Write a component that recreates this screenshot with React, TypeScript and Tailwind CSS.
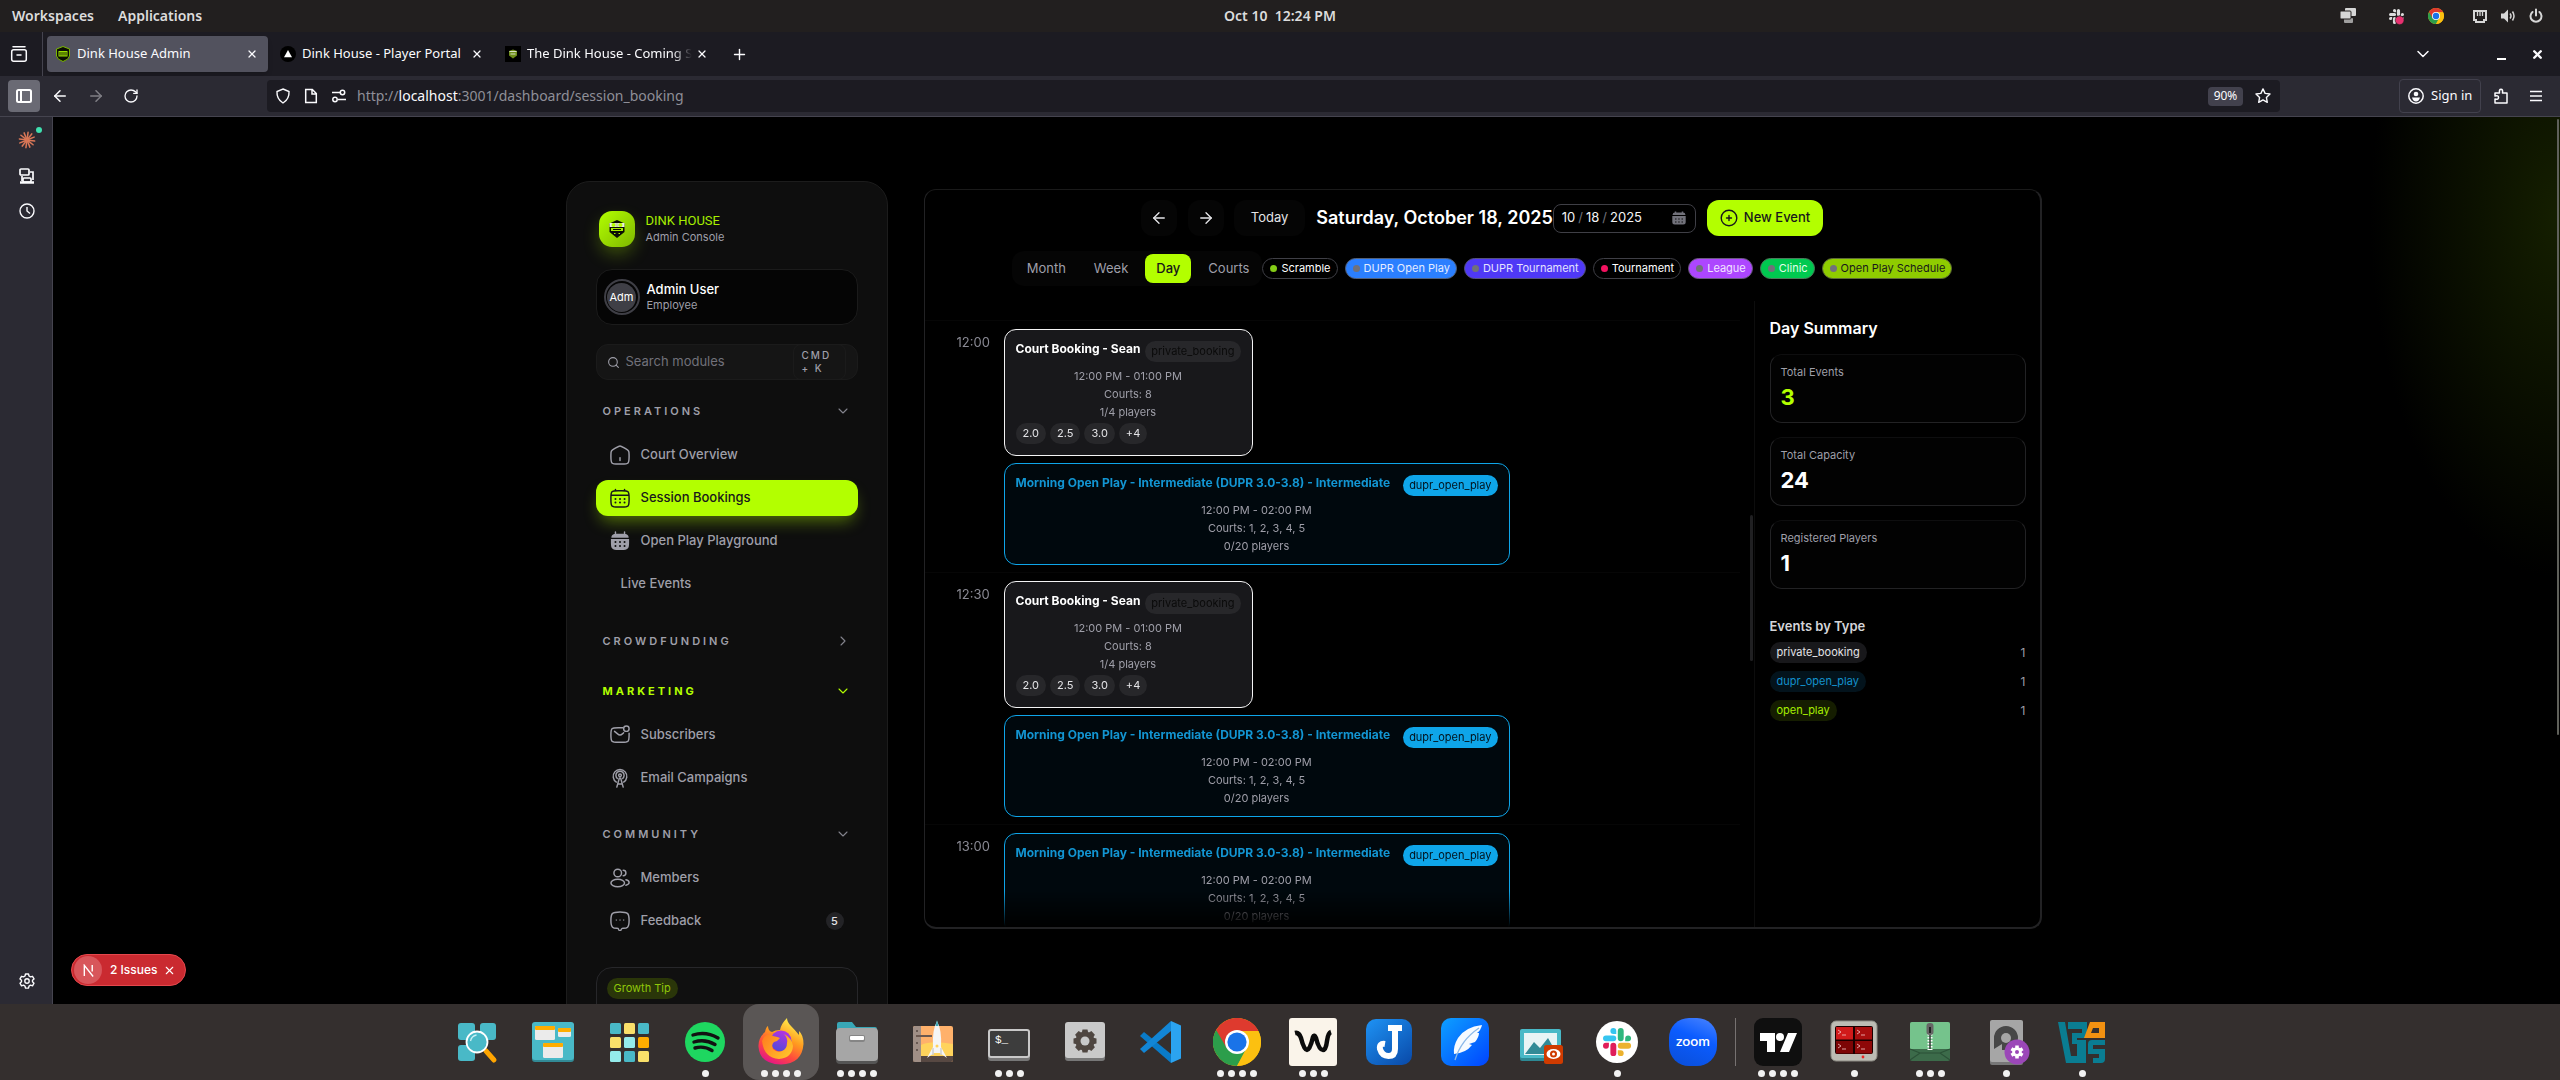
import React from 'react';
import type { ReactNode } from 'react';
import { ArrowLeft, ArrowRight, ChevronDown, ChevronRight, Plus, RotateCw, Search, X } from 'lucide-react';

const SLACK = [
  ['#e01e5a', 'M5.042 15.165a2.528 2.528 0 0 1-2.52 2.523A2.528 2.528 0 0 1 0 15.165a2.527 2.527 0 0 1 2.522-2.52h2.52v2.52zM6.313 15.165a2.527 2.527 0 0 1 2.521-2.52 2.527 2.527 0 0 1 2.521 2.52v6.313A2.528 2.528 0 0 1 8.834 24a2.528 2.528 0 0 1-2.521-2.522v-6.313z'],
  ['#36c5f0', 'M8.834 5.042a2.528 2.528 0 0 1-2.521-2.52A2.528 2.528 0 0 1 8.834 0a2.528 2.528 0 0 1 2.521 2.522v2.52H8.834zM8.834 6.313a2.528 2.528 0 0 1 2.521 2.521 2.528 2.528 0 0 1-2.521 2.521H2.522A2.528 2.528 0 0 1 0 8.834a2.528 2.528 0 0 1 2.522-2.521h6.312z'],
  ['#2eb67d', 'M18.956 8.834a2.528 2.528 0 0 1 2.522-2.521A2.528 2.528 0 0 1 24 8.834a2.528 2.528 0 0 1-2.522 2.521h-2.522V8.834zM17.688 8.834a2.528 2.528 0 0 1-2.523 2.521 2.527 2.527 0 0 1-2.52-2.521V2.522A2.527 2.527 0 0 1 15.165 0a2.528 2.528 0 0 1 2.523 2.522v6.312z'],
  ['#ecb22e', 'M15.165 18.956a2.528 2.528 0 0 1 2.523 2.522A2.528 2.528 0 0 1 15.165 24a2.527 2.527 0 0 1-2.52-2.522v-2.522h2.52zM15.165 17.688a2.527 2.527 0 0 1-2.52-2.523 2.526 2.526 0 0 1 2.52-2.52h6.313A2.527 2.527 0 0 1 24 15.165a2.528 2.528 0 0 1-2.522 2.523h-6.313z'],
];

function ChromeMark() {
  return (
    <>
      <circle cx="24" cy="24" r="24" fill="#fbbc05" />
      <path d="M24 24 L3.2 12 A24 24 0 0 0 24 48 L34.4 30Z" fill="#2c9e4b" />
      <path d="M24 13 H45.4 A24 24 0 0 0 3.2 12 L13.6 30 L24 24Z" fill="#de3a2e" />
      <path d="M24 13 H45.4 A24 24 0 0 1 24 48 L34 29Z" fill="#fcc010" />
      <circle cx="24" cy="24" r="12" fill="#fff" />
      <circle cx="24" cy="24" r="9.6" fill="#1a73e8" />
    </>
  );
}

function Favicon({ kind }: { kind: string }) {
  if (kind === 'admin')
    return (
      <svg viewBox="0 0 16 16" className="size-4 shrink-0">
        <path d="M8 0.5 L14.5 3 V10 Q14 13.5 8 15.5 Q2 13.5 1.5 10 V3Z" fill="#0a0d02" stroke="#7ab800" />
        <rect x="3.5" y="5" width="9" height="5.5" fill="#9be000" />
        <path d="M5 6v3.5M7 6v3.5M9 6v3.5M11 6v3.5M5.5 12h5" stroke="#101500" strokeWidth=".9" />
      </svg>
    );
  if (kind === 'portal')
    return (
      <svg viewBox="0 0 16 16" className="size-4 shrink-0">
        <circle cx="8" cy="8" r="8" fill="#000" />
        <path d="M8 4 L12 11.2 H4Z" fill="#fff" />
      </svg>
    );
  return (
    <svg viewBox="0 0 16 16" className="size-4 shrink-0">
      <rect width="16" height="16" fill="#000" />
      <path d="M8 3.5 L12 5 V9.5 L8 12.5 L4 9.5 V5Z" fill="#6f8f1a" />
      <path d="M4.5 5.5h7M5.5 8h5" stroke="#d8dfc8" />
    </svg>
  );
}

/* ---------- desktop top panel ---------- */
function SystemBar() {
  return (
    <header className="grid h-8 shrink-0 grid-cols-3 items-center bg-[#221f1f] text-sm font-semibold text-[#dcdcdc]">
      <nav className="flex gap-6 pl-3">
        <button>Workspaces</button>
        <button>Applications</button>
      </nav>
      <time className="text-center whitespace-pre">Oct 10  12:24 PM</time>
      <div className="flex items-center justify-end pr-4">
        <svg viewBox="0 0 18 18" className="mr-8 size-[18px]" fill="#d6d6d6">
          <rect x="6" y="1" width="11" height="8" rx="1" />
          <rect x="5" y="11" width="9" height="5" rx="1" opacity=".7" />
          <rect x="1" y="4" width="11" height="8" rx="1" stroke="#221f1f" />
        </svg>
        <svg viewBox="0 0 24 24" className="mr-6 size-[15px] overflow-visible">
          {SLACK.map(([, d]) => <path key={d} d={d} fill="#dcdcdc" />)}
          <circle cx="17" cy="18" r="7" fill="#e8306f" stroke="#221f1f" />
        </svg>
        <svg viewBox="0 0 48 48" className="mr-[28px] size-4"><ChromeMark /></svg>
        <svg viewBox="0 0 16 16" className="mr-3 size-4" fill="none" stroke="#d6d6d6" strokeWidth="2">
          <path d="M2 3h12v9h-2v2H4v-2H2z" />
          <path d="M5.5 4v4M8 4v4M10.500 4v4" strokeWidth="1.300" />
        </svg>
        <svg viewBox="0 0 16 16" className="mr-3 size-4" fill="#d6d6d6">
          <path d="M1 5.500h3l4-4v13l-4-4H1z" />
          <path d="M10 5.500q2 2.500 0 5M12.500 3.500q3 4.500 0 9" fill="none" stroke="#d6d6d6" strokeWidth="1.500" />
        </svg>
        <svg viewBox="0 0 16 16" className="size-4" fill="none" stroke="#d6d6d6" strokeWidth="2" strokeLinecap="round">
          <path d="M8 1.500v6M4.500 4a5.500 5.500 0 1 0 7 0" />
        </svg>
      </div>
    </header>
  );
}

const tabs = [
  { title: 'Dink House Admin', icon: 'admin', active: true },
  { title: 'Dink House - Player Portal', icon: 'portal', active: false },
  { title: 'The Dink House - Coming So', icon: 'soon', active: false },
];

function TabStrip() {
  return (
    <div className="flex h-11 shrink-0 items-center bg-[#1c1b22] text-[#fbfbfe]">
      <button aria-label="Recent windows" className="flex h-full w-[43px] shrink-0 items-center justify-center border-r border-[#45444f] pr-1">
        <svg viewBox="0 0 18 18" className="size-[18px]" fill="none" stroke="#fbfbfe" strokeWidth="1.500" strokeLinecap="round">
          <path d="M3 1.700h12M7 10h4" />
          <rect x="1.700" y="4.700" width="14.600" height="11.500" rx="2" />
        </svg>
      </button>
      <div className="flex gap-1 pl-1">
        {tabs.map((t) => (
          <div key={t.title} className={t.active ? 'flex h-9 w-[221px] items-center gap-[6px] rounded bg-[#52525e] px-2 shadow-md' : 'flex h-9 w-[221px] items-center gap-[6px] px-2'}>
            <Favicon kind={t.icon} />
            <button className={t.icon === 'soon' ? 'flex-1 overflow-hidden text-left text-[13px] whitespace-nowrap [mask-image:linear-gradient(to_right,#000_88%,transparent)]' : 'flex-1 overflow-hidden text-left text-[13px] whitespace-nowrap'}>{t.title}</button>
            <button aria-label={`Close ${t.title}`} className="-ml-1 flex size-4 shrink-0 items-center justify-center"><X className="size-3" strokeWidth={2.500} /></button>
          </div>
        ))}
      </div>
      <button aria-label="New tab" className="ml-[13px]"><Plus className="size-[17px]" /></button>
      <div className="ml-auto flex items-center pr-4">
        <button aria-label="List all tabs" className="mr-16"><ChevronDown className="size-5" strokeWidth={1.800} /></button>
        <button aria-label="Minimize" className="mr-6 flex h-3 w-[10px] items-end"><span className="h-[2px] w-[9px] bg-white" /></button>
        <button aria-label="Close window"><X className="size-[13px]" strokeWidth={4.500} /></button>
      </div>
    </div>
  );
}

function NavBar() {
  return (
    <div className="flex h-[41px] shrink-0 items-center border-b border-[#45444f] bg-[#2b2a33] text-[#fbfbfe]">
      <button aria-label="Sidebar" className="ml-2 flex size-8 items-center justify-center rounded bg-[#6a6a74]">
        <svg viewBox="0 0 16 16" className="size-4" fill="none" stroke="#fff" strokeWidth="2">
          <rect x="1" y="2" width="14" height="12" rx="1.500" />
          <path d="M5 2v12" />
        </svg>
      </button>
      <button aria-label="Back" className="ml-[11px]"><ArrowLeft className="size-[18px]" /></button>
      <button aria-label="Forward" className="ml-[18px] opacity-40"><ArrowRight className="size-[18px]" /></button>
      <button aria-label="Reload" className="ml-[18px]"><RotateCw className="size-4" /></button>
      <div className="ml-[128px] flex h-8 flex-1 items-center rounded bg-[#1c1b22] pr-[9px] pl-2">
        <svg viewBox="0 0 16 16" className="size-4" fill="none" stroke="#fbfbfe" strokeWidth="1.400"><path d="M8 1 L14 3.500 Q14.500 11 8 15 Q1.500 11 2 3.500Z" /></svg>
        <svg viewBox="0 0 16 16" className="ml-3 size-4" fill="none" stroke="#fbfbfe" strokeWidth="1.500"><path d="M2.700 1.500h6.600l4 4v9H2.700zM9 1.500V6h4.300" /></svg>
        <svg viewBox="0 0 16 16" className="ml-3 size-4" fill="none" stroke="#fbfbfe" strokeWidth="1.500"><path d="M1 4.500h8M7 11.500h8" /><circle cx="11.500" cy="4.500" r="2.200" /><circle cx="4" cy="11.500" r="2.200" /></svg>
        <a href="http://localhost:3001/dashboard/session_booking" className="ml-[10px] text-sm text-[#8f8f98]">http://<span className="text-[#fbfbfe]">localhost</span>:3001/dashboard/session_booking</a>
        <button className="ml-auto h-[19px] w-[35px] rounded-sm bg-[#42414d] text-xs">90%</button>
        <button aria-label="Bookmark" className="ml-3">
          <svg viewBox="0 0 16 16" className="size-4" fill="none" stroke="#fbfbfe" strokeWidth="1.400" strokeLinejoin="round"><path d="M8 .9l2.100 4.500 4.900.6-3.600 3.400.9 4.900L8 11.900l-4.300 2.400.9-4.900L1 6l4.900-.6z" /></svg>
        </button>
      </div>
      <button className="ml-[119px] flex h-[34px] w-[82px] items-center gap-[7px] rounded border border-[#42414d] pl-2 text-[13px] whitespace-nowrap">
        <svg viewBox="0 0 16 16" className="size-4 shrink-0" fill="none" stroke="#fbfbfe" strokeWidth="1.500"><circle cx="8" cy="8" r="7.200" /><circle cx="8" cy="6" r="2.300" fill="#fbfbfe" stroke="none" /><path d="M4 9.500h8q-1 4-4 4t-4-4z" fill="#fbfbfe" stroke="none" /></svg>
        Sign in
      </button>
      <button aria-label="Extensions" className="ml-3">
        <svg viewBox="0 0 16 16" className="size-4" fill="none" stroke="#fbfbfe" strokeWidth="1.500" strokeLinejoin="round"><path d="M2 15V11q3.500 1 3.500-1.500T2 8V5h4.500Q6 1.200 8 1.200T9.500 5H14v10z" /></svg>
      </button>
      <button aria-label="Menu" className="mr-[17px] ml-5">
        <svg viewBox="0 0 14 14" className="size-[14px]" stroke="#fbfbfe" strokeWidth="1.500"><path d="M1 2.500h12M1 7h12M1 11.500h12" /></svg>
      </button>
    </div>
  );
}

function BrowserSidebar() {
  return (
    <aside className="flex w-[53px] shrink-0 flex-col items-center border-r border-[#45444f] bg-[#2b2a33] pt-3 pb-[15px] pl-[2px]">
      <button aria-label="Assistant" className="relative size-[22px]">
        <svg viewBox="0 0 20 20" className="size-[22px]" stroke="#d97757" strokeWidth="1.400" strokeLinecap="round">
          {[0, 30, 60, 90, 120, 150, 180, 210, 240, 270, 300, 330].map((a) => <path key={a} d="M10 9V3" transform={`rotate(${a + 8} 10 10)`} />)}
        </svg>
        <span className="absolute -top-[2px] -right-1 size-[6px] rounded-full bg-[#3fe1b0]" />
      </button>
      <button aria-label="Synced tabs" className="mt-4">
        <svg viewBox="0 0 18 18" className="size-[18px]" fill="none" stroke="#fbfbfe" strokeWidth="1.700">
          <rect x="2" y="2" width="9" height="6" rx="1" /><path d="M12 5h3v8M4 9v5" /><path d="M2 15.500h14" strokeWidth="2.500" /><rect x="5" y="11" width="8" height="4" rx="1" />
        </svg>
      </button>
      <button aria-label="History" className="mt-[18px]">
        <svg viewBox="0 0 16 16" className="size-4" fill="none" stroke="#fbfbfe" strokeWidth="1.400"><circle cx="8" cy="8" r="7" /><path d="M8 4v4l3 2.500" /></svg>
      </button>
      <button aria-label="Settings" className="mt-auto">
        <svg viewBox="0 0 16 16" className="size-4" fill="none" stroke="#fbfbfe" strokeWidth="1.400" strokeLinejoin="round">
          <path d="M6.500 1h3l.5 2 1.500.9 2-.6 1.500 2.600L13.500 7.300v1.500L15 10.200l-1.500 2.600-2-.6-1.500.9-.5 2h-3L6 13.100l-1.500-.9-2 .6L1 10.200l1.500-1.400V7.300L1 5.900l1.500-2.600 2 .6L6 3z" /><circle cx="8" cy="8" r="2.200" />
        </svg>
      </button>
    </aside>
  );
}

/* ---------- app sidebar ---------- */
const line = { fill: 'none', stroke: 'currentColor', strokeWidth: 1.6, strokeLinecap: 'round', strokeLinejoin: 'round' } as const;

function NavIcon({ name }: { name: string }) {
  const shapes: Record<string, ReactNode> = {
    home: <><path d="M2 12.200c0-2.290 0-3.430.52-4.380.52-.95 1.470-1.540 3.370-2.720l2-1.240C9.890 2.620 10.890 2 12 2s2.110.62 4.110 1.860l2 1.240c1.900 1.180 2.850 1.770 3.370 2.720.52.95.52 2.090.52 4.380v1.530c0 3.900 0 5.850-1.170 7.060C19.660 22 17.770 22 14 22h-4c-3.770 0-5.660 0-6.830-1.210C2 19.580 2 17.630 2 13.730z" /><path d="M12 15v3" /></>,
    calendar: <><path d="M2 12c0-3.770 0-5.660 1.170-6.830C4.340 4 6.230 4 10 4h4c3.770 0 5.660 0 6.830 1.170C22 6.340 22 8.230 22 12v2c0 3.770 0 5.660-1.170 6.830C19.660 22 17.770 22 14 22h-4c-3.770 0-5.660 0-6.830-1.170C2 19.660 2 17.770 2 14zM7 4V2.500M17 4V2.500M2.500 9h19" /><path d="M7 13h.01M12 13h.01M17 13h.01M7 17h.01M12 17h.01M17 17h.01" strokeWidth="2.200" /></>,
    calendarFill: <><path d="M7 4V2M17 4V2" /><path d="M2.500 8.500C2.600 4.500 5 4 10 4h4c5 0 7.400.5 7.500 4.500z" fill="currentColor" stroke="none" /><path d="M2 9.700h20V14c0 6.500-1.500 8-8 8h-4c-6.500 0-8-1.500-8-8z" fill="currentColor" stroke="none" /><path d="M7 13h.01M12 13h.01M17 13h.01M7 17.500h.01M12 17.500h.01M17 17.500h.01" stroke="#0e0e0e" strokeWidth="2.200" /></>,
    mail: <><path d="M15 4h-5C6.230 4 4.340 4 3.170 5.170 2 6.340 2 8.230 2 12s0 5.660 1.170 6.830C4.340 20 6.230 20 10 20h4c3.770 0 5.660 0 6.830-1.170C22 17.660 22 15.770 22 12v-2M6 8l2.700 2.200c1.500 1.300 2.300 1.900 3.300 1.900s1.800-.6 3.300-1.900L16 9.500" /><circle cx="19" cy="5" r="3" /></>,
    podcast: <><path d="M8 16.500A7.500 7.500 0 1 1 16 16.500" /><path d="M9 12.500A4.500 4.500 0 1 1 15 12.500" /><circle cx="12" cy="9" r="1.500" /><path d="M11.300 12L8.500 22M12.700 12l2.800 10M9.500 18.500h5" /></>,
    users: <><circle cx="9.500" cy="6.500" r="4.200" /><ellipse cx="9.500" cy="17.500" rx="7.500" ry="4.200" /><path d="M15.500 9.500a3 3 0 1 0 0-6M18.500 20c2-.5 3.500-1.500 3.500-3s-1.500-2.500-3.500-3" /></>,
    chat: <><path d="M13.300 21.400l-.5.800c-.4.700-1.300.7-1.700 0l-.5-.8c-.4-.7-.6-1-.9-1.200-.3-.2-.7-.2-1.500-.2-2.200 0-3.400-.2-4.400-1.200C2 17 2 14.800 2 11.500S2 5.500 3.600 3.900C5.200 2.300 7.500 2 12 2s6.800.3 8.400 1.900C22 5.500 22 8 22 11.500s0 5.500-1.700 7.300c-1 1-2.200 1.200-4.400 1.200-.8 0-1.200 0-1.500.2-.4.200-.6.500-1.100 1.200z" /><path d="M8 11h.01M12 11h.01M16 11h.01" strokeWidth="1.800" opacity=".7" /></>,
  };
  return <svg viewBox="1 1 22 22" className="size-5 shrink-0" {...line}>{shapes[name]}</svg>;
}

function SectionHeader({ label, active, closed }: { label: string; active?: boolean; closed?: boolean }) {
  const Icon = closed ? ChevronRight : ChevronDown;
  return (
    <button className={active ? 'flex h-[18px] w-full items-center justify-between pr-[7px] pl-[7px] text-[11px] font-bold tracking-[3px] text-[#b3ff00]' : 'flex h-[18px] w-full items-center justify-between pr-[7px] pl-[7px] text-[11px] font-semibold tracking-[3px] text-[#9f9fa9]'}>
      {label}
      <Icon className={active ? 'size-4' : 'size-4 text-[#84848e]'} strokeWidth={1.600} />
    </button>
  );
}

function NavItem({ label, icon, active, badge }: { label: string; icon?: string; active?: boolean; badge?: string }) {
  return (
    <li>
      <a href="#" className={active
        ? 'flex h-9 items-center gap-[11px] rounded-xl bg-[#b3ff00] px-[14px] text-[13px] font-medium text-[#18181b] shadow-[0_9px_16px_-4px_rgba(179,255,0,0.4)]'
        : 'flex h-9 items-center gap-[11px] rounded-xl px-[14px] text-[13px] font-medium text-[#9f9fa9]'}>
        {icon ? <NavIcon name={icon} /> : null}
        <span className={icon ? '' : 'pl-[11px]'}>{label}</span>
        {badge ? <span className="ml-auto flex size-[18px] items-center justify-center rounded-full bg-[#232326] text-[11px] text-[#e4e4e7]">{badge}</span> : null}
      </a>
    </li>
  );
}

function NavList({ children }: { children: ReactNode }) {
  return <ul className="mt-[17px] flex flex-col gap-[7px]">{children}</ul>;
}

function AppSidebar() {
  return (
    <aside className="h-[960px] w-[322px] shrink-0 rounded-[24px] border border-[#1c1c1c] bg-[#0e0e0e] px-[29px] pt-[29px]">
      <div className="flex h-9 items-center gap-[11px] pl-[3px]">
        <svg viewBox="0 0 36 36" className="size-9 rounded-[13px] bg-linear-to-br from-[#b3ff00] to-[#7fb800] shadow-[0_8px_18px_-2px_rgba(179,255,0,0.3)]">
          <path d="M18 9 L25.500 12.500 V21 L18 27 L10.500 21 V12.500Z" fill="#0b0d05" />
          <path d="M10.500 12h15v4h-15z" fill="#e9efe0" />
          <circle cx="14.500" cy="14" r="2" fill="#b3ff00" /><circle cx="18" cy="14" r="2" fill="#c9d8a0" /><circle cx="21.500" cy="14" r="2" fill="#b3ff00" />
          <path d="M12 17h12v3H12z" fill="#a6ee00" /><path d="M14 18.500h8" stroke="#0b0d05" /><path d="M15 22.500h1.500M19.500 22.500H21" stroke="#a6ee00" />
        </svg>
        <div>
          <p className="font-['Liberation_Sans_Narrow',Roboto,sans-serif] text-[13px] leading-4 text-[#a6ee00]">DINK HOUSE</p>
          <p className="text-[11px] leading-4 text-[#9f9fa9]">Admin Console</p>
        </div>
      </div>

      <div className="mt-[22px] flex h-14 items-center gap-[7px] rounded-2xl border border-[#1b1b1b] bg-[#050505] px-[7px]">
        <span className="flex size-9 shrink-0 items-center justify-center rounded-full border-2 border-[#3f3f46]">
          <span className="flex size-[29px] items-center justify-center rounded-full bg-[#3f3f46] text-[11px] text-white">Adm</span>
        </span>
        <div>
          <p className="text-[13px] leading-4 font-medium text-white">Admin User</p>
          <p className="text-[11px] leading-4 text-[#9f9fa9]">Employee</p>
        </div>
      </div>

      <label className="mt-[19px] flex h-9 items-center gap-[6px] rounded-xl border border-[#1b1b1b] bg-[#151515] pr-[11px] pl-[10px]">
        <Search className="size-[13px] shrink-0 text-[#9f9fa9]" />
        <input type="text" aria-label="Search modules" placeholder="Search modules" className="min-w-0 flex-1 bg-transparent text-[13px] outline-none placeholder:text-[#71717a]" />
        <kbd className="w-[53px] rounded-lg border border-[#1b1b1b] px-2 py-1 font-[Inter] text-[10px] leading-[13px] font-medium tracking-[2px] text-[#9f9fa9]">CMD<br />+ K</kbd>
      </label>

      <nav>
        <div className="mt-[22px]"><SectionHeader label="OPERATIONS" /></div>
        <NavList>
          <NavItem label="Court Overview" icon="home" />
          <NavItem label="Session Bookings" icon="calendar" active />
          <NavItem label="Open Play Playground" icon="calendarFill" />
          <NavItem label="Live Events" />
        </NavList>
        <div className="mt-[30px]"><SectionHeader label="CROWDFUNDING" closed /></div>
        <div className="mt-8"><SectionHeader label="MARKETING" active /></div>
        <NavList>
          <NavItem label="Subscribers" icon="mail" />
          <NavItem label="Email Campaigns" icon="podcast" />
        </NavList>
        <div className="mt-[29px]"><SectionHeader label="COMMUNITY" /></div>
        <NavList>
          <NavItem label="Members" icon="users" />
          <NavItem label="Feedback" icon="chat" badge="5" />
        </NavList>
      </nav>

      <div className="mt-[28px] h-32 rounded-2xl border border-[#27272a] bg-[#101010] p-[10px]">
        <span className="flex h-[21px] w-fit items-center rounded-full bg-[#2a3609] px-[7px] text-[11px] text-[#8fc70a]">Growth Tip</span>
      </div>
    </aside>
  );
}

/* ---------- calendar ---------- */
const filters = [
  { label: 'Scramble', cls: 'border-[#3f3f46] text-white', dot: 'bg-[#84cc16]' },
  { label: 'DUPR Open Play', cls: 'border-[#52617a] bg-[#2b7fff] text-[#e4ecff]', dot: 'bg-[#71717a]' },
  { label: 'DUPR Tournament', cls: 'border-[#55527e] bg-[#4f39f6] text-[#e4e2ff]', dot: 'bg-[#71717a]' },
  { label: 'Tournament', cls: 'border-[#3f3f46] text-white', dot: 'bg-[#f31260]' },
  { label: 'League', cls: 'border-[#6b5a80] bg-[#ad46ff] text-[#f2e4ff]', dot: 'bg-[#71717a]' },
  { label: 'Clinic', cls: 'border-[#4a7a5a] bg-[#00c950] text-[#e0ffec]', dot: 'bg-[#71717a]' },
  { label: 'Open Play Schedule', cls: 'border-[#5d6b35] bg-[#8fcc00] text-[#18181b]', dot: 'bg-[#71717a]' },
];

function CalendarToolbar() {
  const views = ['Month', 'Week', 'Day', 'Courts'];
  return (
    <div className="flex flex-col items-center gap-[15px] pt-[10px]">
      <div className="flex h-9 items-center">
        <button aria-label="Previous day" className="flex size-9 items-center justify-center rounded-xl bg-[#050505]"><ArrowLeft className="size-[18px] text-[#e4e4e7]" strokeWidth={1.800} /></button>
        <button aria-label="Next day" className="ml-[11px] flex size-9 items-center justify-center rounded-xl bg-[#050505]"><ArrowRight className="size-[18px] text-[#e4e4e7]" strokeWidth={1.800} /></button>
        <button className="ml-[10px] h-9 rounded-xl bg-[#050505] px-[17px] text-[13px] text-[#e4e4e7]">Today</button>
        <h1 className="ml-[11px] text-lg font-semibold text-white">Saturday, October 18, 2025</h1>
        <label className="flex h-[29px] w-[143px] items-center justify-between rounded-lg border border-[#3f3f46] pr-2 pl-[7px]">
          <input type="date" aria-label="Go to date" defaultValue="2025-10-18" className="bg-transparent text-[13px] text-[#f4f4f5] outline-none [&::-webkit-calendar-picker-indicator]:hidden [&::-webkit-datetime-edit-text]:px-[2px] [&::-webkit-datetime-edit-text]:text-[#71717a]" />
          <svg viewBox="0 0 16 16" className="size-4 shrink-0"><path d="M4.500 3V1.500M11.500 3V1.500" stroke="#71717a" strokeWidth="1.500" /><path d="M1.500 5Q1.700 2.600 4 2.600h8q2.300 0 2.500 2.400zM1.300 6h13.400v6q0 2.500-2.500 2.500H3.800q-2.500 0-2.500-2.500z" fill="#71717a" /><path d="M4 9h1.500M7.200 9h1.500M10.500 9H12M4 12h1.500M7.200 12h1.500M10.500 12H12" stroke="#111" strokeWidth="1.200" /></svg>
        </label>
        <button className="ml-[11px] flex h-9 items-center gap-[6px] rounded-xl bg-[#b3ff00] px-[13px] text-[13px] font-medium text-[#18181b]">
          <svg viewBox="0 0 18 18" className="size-[18px]" fill="none" stroke="#18181b" strokeWidth="1.400" strokeLinecap="round"><circle cx="9" cy="9" r="7.800" /><path d="M9 6.500v5M6.500 9h5" /></svg>
          New Event
        </button>
      </div>
      <div className="flex h-[35px] items-center">
        <div className="flex h-[35px] items-center gap-[6px] rounded-xl bg-[#050505] pr-[2px] pl-1">
          {views.map((v) => (
            <button key={v} aria-pressed={v === 'Day'} className={v === 'Day' ? 'h-[29px] rounded-lg bg-[#b3ff00] px-[11px] text-[13px] font-medium text-[#18181b]' : 'h-[29px] rounded-lg px-[11px] text-[13px] text-[#9f9fa9]'}>{v}</button>
          ))}
        </div>
        <div className="flex gap-[7px]">
          {filters.map((f) => (
            <button key={f.label} className={`flex h-[21px] items-center gap-1 rounded-full border pr-[6px] pl-[7px] text-[11px] whitespace-nowrap ${f.cls}`}>
              <span className={`size-[7px] rounded-full ${f.dot}`} />
              {f.label}
            </button>
          ))}
        </div>
      </div>
    </div>
  );
}

function CourtBooking() {
  return (
    <article className="h-[127px] w-[249px] rounded-xl border border-[#f4f4f5] bg-[#18181b] p-[11px]">
      <div className="flex h-[21px] items-start justify-between">
        <h3 className="text-xs leading-4 font-bold whitespace-nowrap text-white">Court Booking - Sean</h3>
        <span className="flex h-[21px] items-center rounded-full bg-[#27272a] px-[6px] text-[11px] text-[#0a0a0a]">private_booking</span>
      </div>
      <div className="mt-[5px] text-center text-[11px] leading-[18px] text-[#9f9fa9]">
        <p>12:00 PM - 01:00 PM</p>
        <p>Courts: 8</p>
        <p>1/4 players</p>
      </div>
      <ul className="mt-[2px] flex gap-1">
        {['2.0', '2.5', '3.0', '+4'].map((l) => <li key={l} className="flex h-[21px] items-center rounded-full bg-[#27272a] px-[7px] text-[11px] text-[#e4e4e7]">{l}</li>)}
      </ul>
    </article>
  );
}

function OpenPlay() {
  return (
    <article className="h-[102px] w-[506px] shrink-0 rounded-xl border border-[#0ea5e9] bg-[#00080d] px-[11px] pt-[11px]">
      <div className="flex h-[21px] items-start justify-between">
        <h3 className="text-xs leading-4 font-bold whitespace-nowrap text-[#1295d2]">Morning Open Play - Intermediate (DUPR 3.0-3.8) - Intermediate</h3>
        <span className="flex h-[21px] items-center rounded-full bg-[#0ea5e9] px-[6px] text-[11px] text-[#03131c]">dupr_open_play</span>
      </div>
      <div className="mt-[5px] text-center text-[11px] leading-[18px] text-[#9f9fa9]">
        <p>12:00 PM - 02:00 PM</p>
        <p>Courts: 1, 2, 3, 4, 5</p>
        <p>0/20 players</p>
      </div>
    </article>
  );
}

function Slot({ time, children }: { time: string; children: ReactNode }) {
  return (
    <section className="mr-[14px] flex border-t border-[#060606] pt-2 pb-[7px] pl-[32px]">
      <h2 className="w-[47px] shrink-0 pt-[5px] text-[13px] leading-4 text-[#8a8a94]">{time}</h2>
      <div className="flex flex-1 flex-col gap-[7px]">{children}</div>
    </section>
  );
}

const stats = [
  { label: 'Total Events', value: '3', cls: 'text-[#b3ff00]' },
  { label: 'Total Capacity', value: '24', cls: 'text-white' },
  { label: 'Registered Players', value: '1', cls: 'text-white' },
];

const byType = [
  { label: 'private_booking', cls: 'bg-[#18181b] text-[#e4e4e7]' },
  { label: 'dupr_open_play', cls: 'bg-[#03131c] text-[#1391cc]' },
  { label: 'open_play', cls: 'bg-[#151d00] text-[#a6ee00]' },
];

function DaySummary() {
  return (
    <aside className="w-[286px] shrink-0 border-l border-[#0d0d0d] pt-[15px] pr-[14px] pl-[15px]">
      <h2 className="text-base leading-6 font-semibold text-white">Day Summary</h2>
      <div className="mt-[14px] flex flex-col gap-[14px]">
        {stats.map((s) => (
          <div key={s.label} className="h-[69px] rounded-xl border border-[#222224] border-t-[#0e0e0f] bg-[#020202] px-[10px] pt-[9px]">
            <p className="text-[11px] leading-[17px] text-[#9f9fa9]">{s.label}</p>
            <p className={`mt-[2px] text-[22px] leading-7 font-bold ${s.cls}`}>{s.value}</p>
          </div>
        ))}
      </div>
      <h3 className="mt-[28px] text-[13px] leading-[18px] font-semibold text-[#d4d4d8]">Events by Type</h3>
      <ul className="mt-[7px] flex flex-col gap-2">
        {byType.map((t) => (
          <li key={t.label} className="flex h-[21px] items-center justify-between">
            <span className={`flex h-[21px] items-center rounded-full px-[7px] text-[11px] ${t.cls}`}>{t.label}</span>
            <span className="text-xs text-[#9f9fa9]">1</span>
          </li>
        ))}
      </ul>
    </aside>
  );
}

function CalendarCard() {
  return (
    <main className="mt-2 flex h-[740px] min-w-0 flex-1 flex-col overflow-hidden rounded-xl border border-r-2 border-b-2 border-[#222224] border-t-[#1a1a1a] bg-black">
      <CalendarToolbar />
      <div className="mt-[15px] flex min-h-0 flex-1">
        <div className="relative min-w-0 flex-1 overflow-hidden pt-[19px] [mask-image:linear-gradient(to_bottom,#000_calc(100%-36px),transparent)]">
          <Slot time="12:00"><CourtBooking /><OpenPlay /></Slot>
          <Slot time="12:30"><CourtBooking /><OpenPlay /></Slot>
          <Slot time="13:00"><OpenPlay /></Slot>
          <span className="absolute top-[214px] right-px h-[146px] w-[3px] rounded-full bg-[#202022]" />
        </div>
        <DaySummary />
      </div>
    </main>
  );
}

function IssuesBadge() {
  return (
    <div className="absolute bottom-[18px] left-[18px] flex h-8 items-center rounded-full border border-[#e5484d] bg-[#ca2a30] px-[2px] text-xs font-medium text-white">
      <button aria-label="Open dev tools" className="flex size-7 items-center justify-center rounded-full bg-[#d8565b]">
        <svg viewBox="0 0 14 14" className="size-[13px]" fill="none" stroke="#fff" strokeWidth="1.500"><path d="M2.500 13V1.500L12 13.500" /><path d="M11 1v7" /></svg>
      </button>
      <button className="pl-2">2 Issues</button>
      <button aria-label="Dismiss issues" className="ml-[5px] pr-[7px]"><X className="size-[13px]" strokeWidth={2} /></button>
    </div>
  );
}

/* ---------- dock ---------- */
const gridColors = ['#49b9c7', '#f9e06a', '#49b9c7', '#f9e06a', '#94ebeb', '#ffad00', '#94ebeb', '#49b9c7', '#f9e06a'];
const dockApps: { name: string; dots: number; active?: boolean; art: ReactNode }[] = [
  { name: 'Launcher', dots: 0, art: <><rect x="5" y="5" width="17" height="17" rx="3" fill="#49b9c7" /><rect x="27" y="5" width="16" height="17" rx="3" fill="#49b9c7" /><rect x="5" y="27" width="17" height="16" rx="3" fill="#49b9c7" /><path d="M33 33l8 9" stroke="#ffa500" strokeWidth="5" strokeLinecap="round" /><circle cx="24" cy="24" r="10.500" fill="#49b9c7" stroke="#fff" strokeWidth="1.800" /><path d="M17.500 23q1-5 6-6" fill="none" stroke="#c8f0f4" strokeWidth="1.300" /></> },
  { name: 'Workspaces', dots: 0, art: <><rect x="3" y="5" width="42" height="39" rx="3" fill="#328a96" /><rect x="3" y="4" width="42" height="38" rx="3" fill="#49b9c7" />{[[6, 8, 20, 14], [29, 10, 13, 9], [14, 25, 20, 15]].map(([x, y, w, h]) => <g key={x}><rect x={x} y={y} width={w} height={h} rx="1.500" fill="#ebebeb" /><rect x={x} y={y} width={w} height="4" rx="1" fill="#ffad00" /></g>)}</> },
  { name: 'Applications', dots: 0, art: gridColors.map((c, i) => <rect key={i} x={5 + (i % 3) * 14} y={5 + Math.floor(i / 3) * 14} width="11" height="11" rx="1.500" fill={c} />) },
  { name: 'Spotify', dots: 1, art: <><circle cx="24" cy="24" r="20" fill="#1ed760" /><path d="M12 17q13-4 25 3M13 24q11-3.500 21 2.500M14 30q9-2.500 17 2.500" fill="none" stroke="#121212" strokeWidth="3.400" strokeLinecap="round" /></> },
  { name: 'Firefox', dots: 4, active: true, art: <><defs><linearGradient id="ff1" x1=".8" y1=".05" x2=".3" y2="1"><stop offset="0" stopColor="#fff44f" /><stop offset=".4" stopColor="#ff9a1f" /><stop offset=".7" stopColor="#ff4a3d" /><stop offset="1" stopColor="#e31587" /></linearGradient><linearGradient id="ff2" x1=".7" y1="0" x2=".3" y2="1"><stop offset="0" stopColor="#b833e1" /><stop offset="1" stopColor="#4f4bd8" /></linearGradient><linearGradient id="ff3" x1="0" y1="0" x2="1" y2=".6"><stop offset="0" stopColor="#ff7a1f" /><stop offset="1" stopColor="#ffc02a" /></linearGradient></defs><path d="M30 0q-6 6-7 12-5 0-8 2-4-1-4-6-2 1-3 6Q1 20 1.500 29 3 46 24 46.500 45 46 46.500 26 46.500 17 42 13q0 3 0 4Q38 12 34 8q-4-4-4-8z" fill="url(#ff1)" /><circle cx="24" cy="23" r="10.500" fill="url(#ff2)" /><path d="M7 19q4-4 9-1 5 1 7 2-2 3-6 4-3 3-1 7 4 4 9 2 5-2 5-8 1-5-3-9 8 4 9 12-1 12-14 13-15-1-17-18z" fill="url(#ff3)" /></> },
  { name: 'Files', dots: 4, art: <><path d="M4 6q0-2 2-2h13l4 5h19q2 0 2 2v8H4z" fill="#38a7b6" /><rect x="3" y="12" width="42" height="34" rx="4" fill="#555" /><rect x="3" y="10" width="42" height="33" rx="4" fill="#a6a6a6" /><rect x="16" y="17" width="16" height="7" rx="2" fill="#858585" /><rect x="17" y="18" width="14" height="4" rx="1" fill="#fff" /></> },
  { name: 'Rocket', dots: 0, art: <><rect x="4" y="8" width="40" height="36" rx="2" fill="#ffb16b" /><path d="M12 27q10-5 32-1v12H12z" fill="#ffd35c" /><path d="M4 38h40v4q0 2-2 2H6q-2 0-2-2z" fill="#574842" /><path d="M4 10q0-2 2-2h6v36H6q-2 0-2-2z" fill="#a08f86" /><path d="M7 17h16v2H7z" fill="#6b5850" /><circle cx="8" cy="13" r="1" fill="#574842" /><circle cx="8" cy="25" r="1" fill="#574842" /><circle cx="8" cy="32" r="1" fill="#574842" /><path d="M28 3q5 9 4 26l6 11-7-5h-6l-7 5 6-11q-1-17 4-26z" fill="#f5f5f5" /><path d="M24 30v7M32 30v7" stroke="#cfcfcf" strokeWidth="1.500" /><path d="M26.500 8h3l-1.500-6z" fill="#38a7b6" /><circle cx="28" cy="28" r="1.500" fill="#ffd35c" /></> },
  { name: 'Terminal', dots: 3, art: <><rect x="3" y="12" width="42" height="31" rx="3" fill="#777" /><rect x="3" y="11" width="42" height="29" rx="3" fill="#c9c9c9" /><rect x="5" y="13" width="38" height="25" rx="1" fill="#3d3d3d" /><text x="10" y="25" fontSize="11" fill="#fff" fontFamily="Liberation Mono">$_</text></> },
  { name: 'Settings', dots: 0, art: <><rect x="4" y="6" width="40" height="37" rx="3" fill="#777" /><rect x="4" y="4" width="40" height="36" rx="3" fill="#c9c9c9" />{[0, 45, 90, 135, 180, 225, 270, 315].map((a) => <path key={a} d="M20.500 16l1-4.500h5l1 4.500z" fill="#4f4640" transform={`rotate(${a} 24 23)`} />)}<circle cx="24" cy="23" r="9.500" fill="#4f4640" /><circle cx="24" cy="23" r="4.500" fill="#c9c9c9" /></> },
  { name: 'Code', dots: 0, art: <><path d="M3 18l4-4 27 22v9z" fill="#0a7bc8" /><path d="M34 3v10L7 35l-4-4z" fill="#1286d6" /><path d="M34 3l10 4.500v33L34 45z" fill="#2ba3f0" /></> },
  { name: 'Chrome', dots: 4, art: <ChromeMark /> },
  { name: 'Wave', dots: 3, art: <><rect width="48" height="48" rx="3" fill="#faf4ea" /><path d="M6 15q4-1 6 5 3 12 6 12t6-13q1-3 3 1 3 12 7 12 3 0 4-9 1-8 4-9" fill="none" stroke="#0b0b0b" strokeWidth="4.500" /></> },
  { name: 'Joplin', dots: 0, art: <><defs><linearGradient id="jp" x1="0" y1="0" x2=".8" y2="1"><stop offset="0" stopColor="#1e93f5" /><stop offset="1" stopColor="#0b4fae" /></linearGradient></defs><rect x="1" y="1" width="46" height="46" rx="10" fill="url(#jp)" /><path d="M23 10h14M30 11v20q0 7-6.500 7T15 31q-1-6 5-5" fill="none" stroke="#fff" strokeWidth="6" /></> },
  { name: 'Notes', dots: 0, art: <><defs><linearGradient id="ft" x1="0" y1="0" x2="1" y2="1"><stop offset="0" stopColor="#0da0ff" /><stop offset="1" stopColor="#0044ff" /></linearGradient></defs><rect width="48" height="48" rx="10" fill="url(#ft)" /><path d="M41 7Q24 9 17 20q-5 8-4 16 12-1 18-9l-3-1 6-2q4-5 4-9l-2 0q4-3 5-8z" fill="#f6faff" /><path d="M38 10Q20 22 14 42" fill="none" stroke="#8bb8e8" strokeWidth="1.300" /></> },
  { name: 'Image Viewer', dots: 0, art: <><rect x="3" y="12" width="41" height="31" rx="2" fill="#2d8994" /><rect x="3" y="11" width="41" height="29" rx="2" fill="#49b9c7" /><rect x="7" y="15" width="33" height="22" fill="#e8f4f5" /><path d="M8 36l9-12 6 6 8-10 9 16z" fill="#328a96" /><rect x="27" y="27" width="19" height="19" rx="2.500" fill="#cf3b00" /><ellipse cx="36.500" cy="36" rx="7" ry="5" fill="#fff" /><circle cx="36.500" cy="36" r="3.500" fill="#cf3b00" /><circle cx="36.500" cy="36" r="1.500" fill="#fff" /></> },
  { name: 'Slack', dots: 1, art: <><circle cx="24" cy="24" r="21" fill="#fff" /><g transform="translate(10 10) scale(1.170)">{SLACK.map(([c, d]) => <path key={c} d={d} fill={c} />)}</g></> },
  { name: 'Zoom', dots: 0, art: <><defs><linearGradient id="zm" x1=".7" y1="0" x2=".3" y2="1"><stop offset="0" stopColor="#3f7dff" /><stop offset=".4" stopColor="#0b5cff" /><stop offset="1" stopColor="#0a50dd" /></linearGradient></defs><rect width="48" height="48" rx="20" fill="url(#zm)" /><text x="24" y="28" textAnchor="middle" fontSize="14" fontWeight="600" fill="#fff" fontFamily="Lato">zoom</text></> },
  { name: 'TradingView', dots: 4, art: <><rect width="48" height="48" rx="9" fill="#0f0f0f" /><path d="M6 15h15v19h-8V23H6zM34 15h9l-8 19h-9z" fill="#fff" /><circle cx="26" cy="19" r="4" fill="#fff" /></> },
  { name: 'Terminator', dots: 1, art: <><rect x="1" y="3" width="46" height="40" rx="5" fill="#bdbcb4" /><rect x="1" y="3" width="46" height="40" rx="5" fill="none" stroke="#8b8a82" /><rect x="5" y="8" width="38" height="28" rx="2" fill="#1a0000" />{[[6, 9, '#d11a1a'], [25, 9, '#a80e0e'], [6, 23, '#7c0505'], [25, 23, '#8e0808']].map(([x, y, c]) => <g key={`${x}${y}`}><rect x={x} y={y} width="17" height="12.500" fill={c as string} /><path d={`M${Number(x) + 2} ${Number(y) + 3}l3 2-3 2M${Number(x) + 6} ${Number(y) + 8}h4`} fill="none" stroke="#f5c6c6" strokeWidth=".8" /></g>)}<circle cx="33" cy="39" r="1.400" fill="#e22" /></> },
  { name: 'Archive', dots: 3, art: <><rect x="4" y="4" width="40" height="39" rx="2" fill="#3c6b4a" /><path d="M4 6q0-2 2-2h36q2 0 2 2v25H4z" fill="#75c38c" /><path d="M4 42l10-7h20l10 7M14 35L4 31M34 35l10-4" fill="none" stroke="#2b5137" strokeWidth="1.200" /><path d="M24 16v16" stroke="#fff" strokeWidth="5" strokeDasharray="1.500 1.500" /><path d="M24 14v17" stroke="#333" strokeWidth="1.500" /><rect x="20.500" y="5" width="7" height="12" rx="3" fill="#666" /><rect x="23" y="9" width="2" height="6" fill="#222" /></> },
  { name: 'Disks', dots: 1, art: <><rect x="8" y="3" width="33" height="44" rx="2" fill="#777" /><rect x="8" y="2" width="33" height="42" rx="2" fill="#a6a6a6" /><path d="M12 31V20a12 12 0 0 1 24 0q0 9-9 12h-7v-6z" fill="#474747" /><circle cx="24" cy="20" r="5" fill="#a6a6a6" /><circle cx="35" cy="34" r="12.500" fill="#9b47b8" /><path d="M35 27.500v13M29.400 30.800l11.200 6.400M29.400 37.200l11.200-6.400" stroke="#fff" strokeWidth="3.500" /><circle cx="35" cy="34" r="4.800" fill="#fff" /><circle cx="35" cy="34" r="2" fill="#9b47b8" /></> },
  { name: 'VirtualBox', dots: 1, art: <><path d="M0 4h7l6 34h6V26h-5V15h10v-4H10V4h19v16h-10v2h9v23H8z" fill="#0a7d92" /><path d="M32 4h15v16H26z" fill="#f29111" /><path d="M35 10h6v5h-8z" fill="#342f2e" /><path d="M47 22v5H35v4h12v10q0 4-4 4h-8v-5h6v-4H30V26q0-4 4-4z" fill="#0a7d92" /></> },
];

function Dock() {
  return (
    <footer className="flex h-[76px] shrink-0 items-start justify-center bg-[#342f2e] pr-px">
      {dockApps.map((a) => (
        <React.Fragment key={a.name}>
          {a.name === 'TradingView' ? <span className="mx-1 mt-[14px] h-12 w-px bg-[#777271]" /> : null}
          <button aria-label={a.name} className={a.active ? 'flex h-[76px] w-[76px] flex-col items-center rounded-2xl bg-[#5a5655] pt-[14px]' : 'flex h-[76px] w-[76px] flex-col items-center pt-[14px]'}>
            <svg viewBox="0 0 48 48" className="size-12">{a.art}</svg>
            <span className="mt-1 flex gap-1">
              {Array.from({ length: a.dots }, (_, i) => <span key={i} className="size-[7px] rounded-full bg-[#f2f2f2]" />)}
            </span>
          </button>
        </React.Fragment>
      ))}
    </footer>
  );
}

export default function App() {
  return (
    <div className="flex h-screen flex-col overflow-hidden bg-black font-['Noto_Sans','Open_Sans',sans-serif]">
      <SystemBar />
      <TabStrip />
      <NavBar />
      <div className="flex min-h-0 flex-1">
        <BrowserSidebar />
        <div className="relative min-w-0 flex-1 overflow-hidden bg-[radial-gradient(190px_360px_at_100%_100px,#151f00,#000)] font-[Inter,sans-serif]">
          <div className="mx-auto flex max-w-[1482px] gap-9 pt-16 pr-[6px]">
            <AppSidebar />
            <CalendarCard />
          </div>
          <IssuesBadge />
          <span className="absolute top-[2px] right-px h-[616px] w-[2px] rounded-full bg-[#5f605a]" />
        </div>
      </div>
      <Dock />
    </div>
  );
}
